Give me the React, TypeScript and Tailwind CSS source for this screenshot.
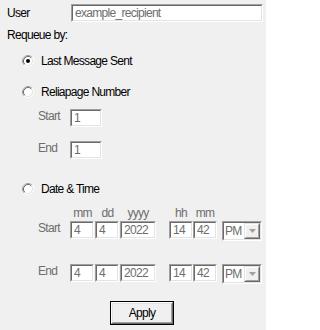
import React from 'react';

const GRAY = 'text-[#6d6d6d]';

// sunken windows-classic edit box
const Sunken: React.FC<{ className?: string; children?: React.ReactNode }> = ({ className = '', children }) => (
  <div className={`border border-t-[#a0a0a0] border-l-[#a0a0a0] border-r-white border-b-white ${className}`}>
    <div className="h-full border border-t-[#696969] border-l-[#696969] border-r-[#e3e3e3] border-b-[#e3e3e3] bg-white">
      {children}
    </div>
  </div>
);

const Field: React.FC<{ value: string; w: string }> = ({ value, w }) => (
  <Sunken className={`${w} h-[18px]`}>
    <div className={`px-[2px] ${GRAY} whitespace-nowrap overflow-hidden`}>{value}</div>
  </Sunken>
);

const Radio: React.FC<{ checked?: boolean }> = ({ checked }) => (
  <svg width="12" height="12" viewBox="0 0 12 12" className="shrink-0">
    <circle cx="6" cy="6" r="4.2" fill="#ffffff" />
    <path d="M2.11 9.89A5.5 5.5 0 0 1 9.89 2.11" fill="none" stroke="#a0a0a0" />
    <path d="M9.89 2.11A5.5 5.5 0 0 1 2.11 9.89" fill="none" stroke="#ffffff" />
    <path d="M2.82 9.18A4.5 4.5 0 0 1 9.18 2.82" fill="none" stroke="#696969" />
    <path d="M9.18 2.82A4.5 4.5 0 0 1 2.82 9.18" fill="none" stroke="#e3e3e3" />
    {checked && <circle cx="6" cy="6" r="2" fill="#000000" />}
  </svg>
);

const AmPm: React.FC = () => (
  <Sunken className="w-[40px] h-[20px]">
    <div className="flex h-full">
      <div className={`flex-1 pl-[1px] pt-[1px] ${GRAY}`}>PM</div>
      <div className="w-[16px] h-full border border-t-[#e3e3e3] border-l-[#e3e3e3] border-r-[#696969] border-b-[#696969]">
        <div className="h-full border border-t-white border-l-white border-r-[#a0a0a0] border-b-[#a0a0a0] bg-[#f0f0f0] flex items-center justify-center">
          <svg width="7" height="4" viewBox="0 0 7 4">
            <path d="M0 0H7L3.5 4Z" fill="#a0a0a0" />
          </svg>
        </div>
      </div>
    </div>
  </Sunken>
);

const DateRow: React.FC<{ label: string }> = ({ label }) => (
  <div className="flex items-start pl-[38px]">
    <div className={`w-[32px] ${GRAY}`}>{label}</div>
    <div className="flex gap-[1px]">
      <Field value="4" w="w-[24px]" />
      <Field value="4" w="w-[24px]" />
      <Field value="2022" w="w-[36px]" />
    </div>
    <div className="flex ml-[13px]">
      <Field value="14" w="w-[24px]" />
      <Field value="42" w="w-[24px]" />
    </div>
    <div className="ml-[5px]">
      <AmPm />
    </div>
  </div>
);

export default function App() {
  return (
    <div className="w-[266px] h-[330px] bg-[#f0f0f0] text-black font-['Liberation_Sans',Arial,sans-serif] text-[12px] leading-[14px] tracking-[-0.7px] overflow-hidden">
      <div className="flex items-center pt-[4px] pl-[7px]">
        <div className="w-[64px]">User</div>
        <Field value="example_recipient" w="w-[192px]" />
      </div>

      <div className="mt-[6px] pl-[7px]">Requeue by:</div>

      <div className="mt-[12px] pl-[22px] flex items-center gap-[7px]">
        <Radio checked />
        <span>Last Message Sent</span>
      </div>

      <div className="mt-[17px] pl-[22px] flex items-center gap-[7px]">
        <Radio />
        <span>Reliapage Number</span>
      </div>

      <div className="mt-[10px] pl-[38px] flex items-start">
        <div className={`w-[32px] ${GRAY}`}>Start</div>
        <Field value="1" w="w-[32px]" />
      </div>
      <div className="mt-[14px] pl-[38px] flex items-start">
        <div className={`w-[32px] ${GRAY}`}>End</div>
        <Field value="1" w="w-[32px]" />
      </div>

      <div className="mt-[23px] pl-[22px] flex items-center gap-[7px]">
        <Radio />
        <span>Date &amp; Time</span>
      </div>

      {/* column captions */}
      <div className={`mt-[10px] pl-[70px] flex ${GRAY}`}>
        <div className="w-[25px] text-center">mm</div>
        <div className="w-[25px] text-center">dd</div>
        <div className="w-[36px] text-center">yyyy</div>
        <div className="w-[24px] ml-[13px] text-center">hh</div>
        <div className="w-[24px] text-center">mm</div>
      </div>

      <div className="mt-[1px]">
        <DateRow label="Start" />
      </div>
      <div className="mt-[23px]">
        <DateRow label="End" />
      </div>

      <div className="mt-[17px] ml-[110px] w-[64px] h-[24px] border border-black">
        <div className="h-full border border-t-white border-l-white border-r-[#696969] border-b-[#696969]">
          <div className="h-full border border-t-[#e3e3e3] border-l-[#e3e3e3] border-r-[#a0a0a0] border-b-[#a0a0a0] bg-[#f0f0f0] flex items-center justify-center">
            Apply
          </div>
        </div>
      </div>
    </div>
  );
}
